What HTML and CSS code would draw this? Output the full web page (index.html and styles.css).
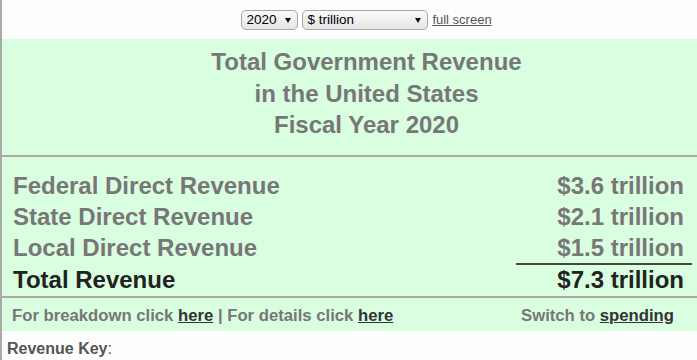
FILE: index.html
```html
<!DOCTYPE html>
<html>
<head>
<meta charset="utf-8">
<link rel="stylesheet" href="styles.css">
</head>
<body>
<div class="page">
  <div class="topbar">
    <span class="sel sel-year"><select><option>2020</option></select></span>
    <span class="sel sel-unit"><select><option>$ trillion</option></select></span>
    <a class="fs" href="#">full screen</a>
  </div>
  <div class="panel">
    <div class="title">
      <div>Total Government Revenue</div>
      <div>in the United States</div>
      <div>Fiscal Year 2020</div>
    </div>
    <div class="rows">
      <div class="row"><span class="label">Federal Direct Revenue</span><span class="value">$3.6 trillion</span></div>
      <div class="row"><span class="label">State Direct Revenue</span><span class="value">$2.1 trillion</span></div>
      <div class="row"><span class="label">Local Direct Revenue</span><span class="value">$1.5 trillion</span></div>
      <div class="row total"><span class="label">Total Revenue</span><span class="value">$7.3 trillion</span></div>
    </div>
    <div class="footer">
      <span>For breakdown click <a href="#">here</a> | For details click <a href="#">here</a></span>
      <span>Switch to <a href="#">spending</a></span>
    </div>
  </div>
  <div class="key"><b>Revenue Key</b>:</div>
</div>
</body>
</html>
```

FILE: styles.css
```css
html, body {
  margin: 0;
  padding: 0;
  background: #fdfdfd;
  overflow: hidden;
}
.page {
  border-left: 2px solid #aaa;
  min-height: 360px;
  font-family: "Liberation Sans", Arial, sans-serif;
}
.topbar {
  height: 39px;
  display: flex;
  align-items: center;
  justify-content: center;
  gap: 4px;
  padding-left: 34px;
  box-sizing: border-box;
}
.sel {
  position: relative;
  display: inline-block;
}
.sel select {
  appearance: none;
  -webkit-appearance: none;
  font-family: "Liberation Sans", Arial, sans-serif;
  font-size: 13.5px;
  color: #000;
  height: 20px;
  border: 1px solid #a6a6a6;
  border-radius: 5px;
  background: linear-gradient(#fafafa, #e6e6e6);
  padding: 0 0 0 4px;
  margin: 0;
  box-sizing: border-box;
}
.sel-year select { width: 57px; }
.sel-unit select { width: 126px; }
.sel::after {
  content: "";
  position: absolute;
  right: 7px;
  top: 8px;
  border-left: 3.5px solid transparent;
  border-right: 3.5px solid transparent;
  border-top: 5px solid #111;
  pointer-events: none;
}
.fs {
  font-size: 13px;
  color: #555;
  margin-left: 0;
}
.panel {
  background: #d9fee0;
}
.title {
  text-align: center;
  font-size: 24px;
  font-weight: bold;
  color: #777;
  line-height: 31.5px;
  padding: 7px 0 14px 34px;
  border-bottom: 2px solid #aaa;
}
.rows {
  padding: 13px 5px 2px 11px;
  border-bottom: 2px solid #aaa;
}
.row {
  display: flex;
  justify-content: space-between;
  font-size: 24px;
  font-weight: bold;
  color: #777;
  line-height: 31px;
}
.row .value {
  width: 176px;
  box-sizing: border-box;
  text-align: right;
  padding-right: 8px;
}
.row.total {
  color: #222;
  line-height: 29px;
}
.row.total .value {
  border-top: 2px solid #444;
}
.row.total .label {
  padding-top: 2px;
}
.footer {
  display: flex;
  justify-content: space-between;
  font-size: 16.7px;
  font-weight: bold;
  color: #777;
  height: 33px;
  box-sizing: border-box;
  padding: 3px 23px 0 10px;
  align-items: center;
}
.footer a {
  color: #333;
}
.key {
  padding: 9px 5px 0;
  font-size: 16px;
  color: #555;
}
```
